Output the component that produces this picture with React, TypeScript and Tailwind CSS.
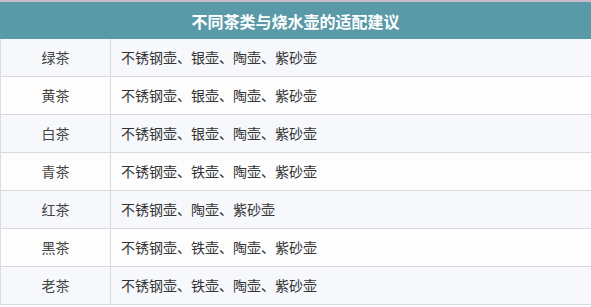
import React from "react";

const rows: [string, string][] = [
  ["绿茶", "不锈钢壶、银壶、陶壶、紫砂壶"],
  ["黄茶", "不锈钢壶、银壶、陶壶、紫砂壶"],
  ["白茶", "不锈钢壶、银壶、陶壶、紫砂壶"],
  ["青茶", "不锈钢壶、铁壶、陶壶、紫砂壶"],
  ["红茶", "不锈钢壶、陶壶、紫砂壶"],
  ["黑茶", "不锈钢壶、铁壶、陶壶、紫砂壶"],
  ["老茶", "不锈钢壶、铁壶、陶壶、紫砂壶"],
];

export default function App() {
  return (
    <div
      className="w-[591px] h-[307px] bg-white overflow-hidden"
      style={{ fontFamily: '"Microsoft YaHei", "Noto Sans CJK SC", sans-serif' }}
    >
      <div className="h-[2px] bg-[#c9bcc8]" />
      <div className="h-[37px] bg-[#5a9aa8] flex items-center justify-center text-white font-bold text-[16px]">
        不同茶类与烧水壶的适配建议
      </div>
      <div className="border-l border-[#dcdde3]">
        {rows.map(([a, b], i) => (
          <div
            key={a}
            className={`flex h-[38px] border-b border-[#d9dadf] ${i % 2 === 0 ? "bg-[#f6f8fc]" : "bg-[#fdfdfe]"}`}
          >
            <div className="w-[110px] shrink-0 flex items-center justify-center border-r border-[#d9dadf] text-[14px] text-[#444]">
              {a}
            </div>
            <div className="flex-1 flex items-center pl-[10px] text-[14px] text-[#333]">{b}</div>
          </div>
        ))}
      </div>
    </div>
  );
}
